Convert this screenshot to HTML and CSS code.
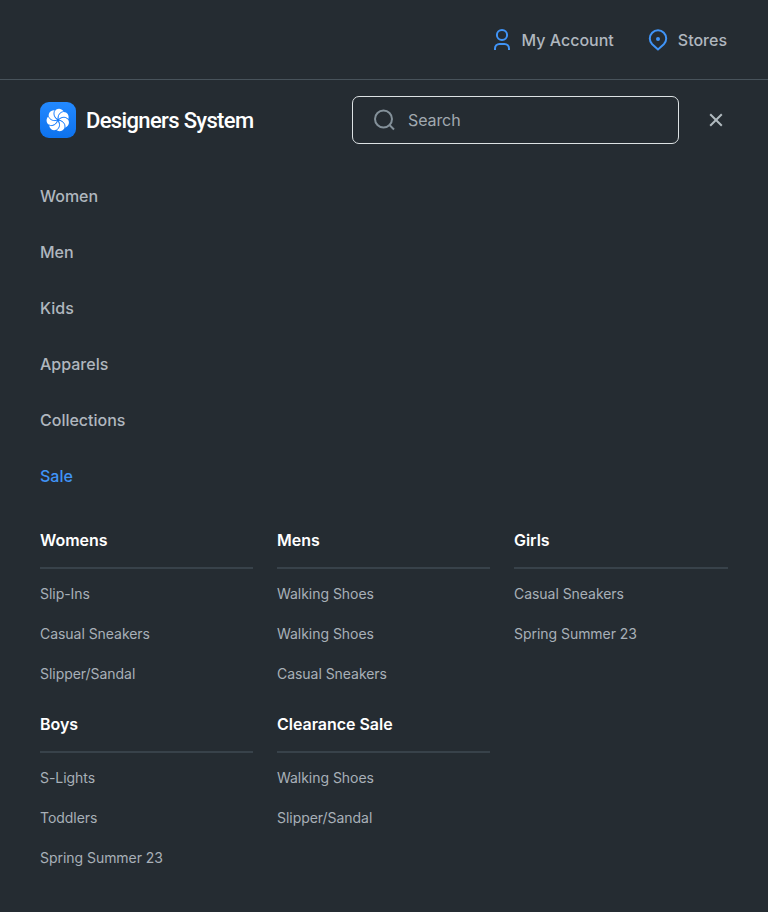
FILE: index.html
```html
<!DOCTYPE html>
<html lang="en">
<head>
<meta charset="utf-8">
<title>Designers System</title>
<link rel="stylesheet" href="styles.css">
</head>
<body>
<div class="topbar">
  <a class="toplink"><svg width="24" height="24" viewBox="0 0 24 24" fill="none" stroke="currentColor" stroke-width="2"><circle cx="12" cy="7" r="5.1"/><path d="M5 22v-1.500a4.500 4.500 0 0 1 4.500-4.500h5a4.500 4.500 0 0 1 4.500 4.500v1.500"/></svg><span>My Account</span></a>
  <a class="toplink"><svg width="24" height="24" viewBox="0 0 24 24" fill="none" stroke="currentColor" stroke-width="2"><path d="M12 21.500L6.200 16.300a8.200 8.200 0 1 1 11.600 0z"/><circle cx="12" cy="11" r="2" fill="currentColor" stroke="none"/></svg><span>Stores</span></a>
</div>
<header class="header">
  <a class="brand">
    <svg width="36" height="36" viewBox="0 0 36 36">
      <defs>
        <linearGradient id="tile" x1="0" y1="0" x2="0" y2="1"><stop offset="0" stop-color="#2389ff"/><stop offset="1" stop-color="#0d72ee"/></linearGradient>
        <path id="petal" d="M-.2-.9C-3-2-5-4.800-4.200-7.800C-3.200-11.800 2-12.800 4.800-9.200C5-8.800 4.800-8.600 4.400-8.500C1.200-7.900-.7-4.800-.2-.9z"/>
      </defs>
      <rect width="36" height="36" rx="9" fill="url(#tile)"/>
      <g transform="translate(18 18)" fill="#fff">
        <use href="#petal" transform="rotate(5)"/><use href="#petal" transform="rotate(56.400)"/><use href="#petal" transform="rotate(107.900)"/><use href="#petal" transform="rotate(159.300)"/><use href="#petal" transform="rotate(210.700)"/><use href="#petal" transform="rotate(262.100)"/><use href="#petal" transform="rotate(313.600)"/>
      </g>
      <g transform="translate(18 18)" fill="none" stroke="#187eff" stroke-width=".8">
        <path id="seam" d="M0 0C-.9-4.500 1-8.200 5-9" transform="rotate(5)"/><use href="#seam" transform="rotate(51.400)"/><use href="#seam" transform="rotate(102.900)"/><use href="#seam" transform="rotate(154.300)"/><use href="#seam" transform="rotate(205.700)"/><use href="#seam" transform="rotate(257.100)"/><use href="#seam" transform="rotate(308.600)"/>
      </g>
    </svg>
    <span>Designers System</span>
  </a>
  <div class="search">
    <svg width="24" height="24" viewBox="0 0 24 24" fill="none" stroke="currentColor" stroke-width="2"><circle cx="11.500" cy="11" r="8.500"/><path d="M17.500 17l4.500 4.500"/></svg>
    <span>Search</span>
  </div>
  <a class="close"><svg width="24" height="24" viewBox="0 0 24 24" fill="none" stroke="currentColor" stroke-width="2"><path d="M6.200 6.200l11.600 11.600M17.800 6.200L6.200 17.800"/></svg></a>
</header>
<nav class="menu">
  <a>Women</a><a>Men</a><a>Kids</a><a>Apparels</a><a>Collections</a><a class="active">Sale</a>
</nav>
<div class="groups">
  <section><h3>Womens</h3><a>Slip-Ins</a><a>Casual Sneakers</a><a>Slipper/Sandal</a></section>
  <section><h3>Mens</h3><a>Walking Shoes</a><a>Walking Shoes</a><a>Casual Sneakers</a></section>
  <section><h3>Girls</h3><a>Casual Sneakers</a><a>Spring Summer 23</a></section>
  <section><h3>Boys</h3><a>S-Lights</a><a>Toddlers</a><a>Spring Summer 23</a></section>
  <section><h3>Clearance Sale</h3><a>Walking Shoes</a><a>Slipper/Sandal</a></section>
</div>
</body>
</html>
```
FILE: styles.css
```css
* { box-sizing: border-box; }
body {
  margin: 0;
  min-height: 912px;
  background: #252c32;
  color: #b0b7bf;
  font: 500 16px/24px Inter, sans-serif;
}
svg { display: block; flex: none; }
.topbar {
  height: 80px;
  padding: 0 41px 0 40px;
  display: flex;
  justify-content: flex-end;
  align-items: center;
  gap: 32px;
  border-bottom: 1px solid #48535b;
}
.toplink { display: flex; align-items: center; gap: 8px; padding-top: 1px; }
.toplink svg { color: #4094f7; }
.header {
  height: 80px;
  padding: 0 40px;
  display: flex;
  align-items: center;
}
.brand {
  display: flex;
  align-items: center;
  gap: 10px;
  color: #fff;
  font: 500 22px/32px Roboto, sans-serif;
  letter-spacing: -0.65px;
}
.brand span { padding-top: 2px; }
.search {
  width: 327px;
  height: 48px;
  margin-left: auto;
  padding: 0 19px;
  display: flex;
  align-items: center;
  gap: 12px;
  border: 1px solid #dde2e4;
  border-radius: 7px;
  font-weight: 400;
  letter-spacing: -0.1px;
  color: #a1a9b0;
}
.search svg { color: #84919a; }
.close { margin-left: 25px; color: #b0babf; }
.menu { padding: 8px 40px 0; display: flex; flex-direction: column; }
.menu a { height: 56px; line-height: 56px; }
.menu .active { color: #4094f7; }
.groups {
  padding: 16px 40px 0;
  display: grid;
  grid-template-columns: 213px 213px 214px;
  column-gap: 24px;
  row-gap: 8px;
}
.groups section { display: flex; flex-direction: column; height: 176px; }
.groups h3 {
  height: 49px;
  margin: 0 0 5px;
  padding-top: 8px;
  border-bottom: 2px solid #38424a;
  color: #fff;
  font: 600 16px/24px Inter, sans-serif;
  letter-spacing: -0.03px;
}
.groups a {
  height: 40px;
  font-weight: 400;
  font-size: 14px;
  line-height: 40px;
  letter-spacing: -0.04px;
  color: #a8b0b8;
}
```
